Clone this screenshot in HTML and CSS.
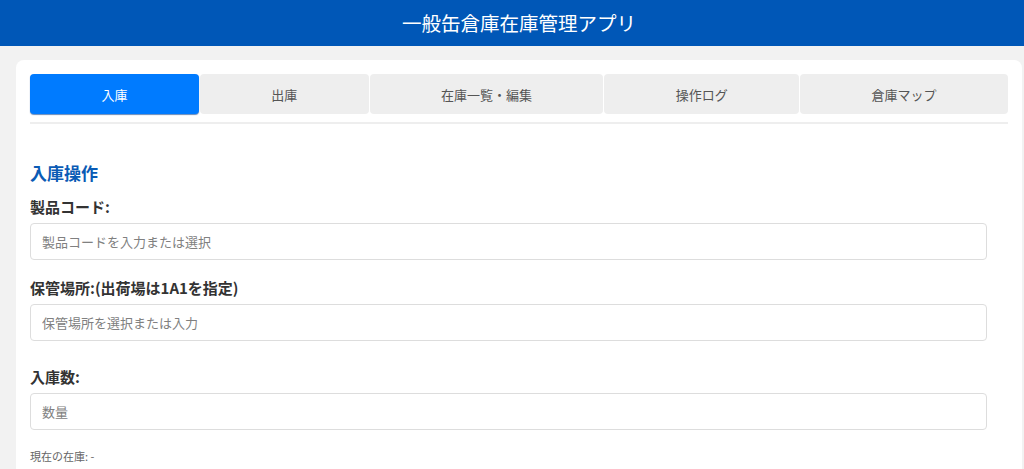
FILE: index.html
```html
<!DOCTYPE html>
<html lang="ja">
<head>
<meta charset="utf-8">
<title>一般缶倉庫在庫管理アプリ</title>
<link rel="stylesheet" href="styles.css">
</head>
<body>
<header class="app-header">
  <h1 class="app-title">一般缶倉庫在庫管理アプリ</h1>
</header>
<main class="card">
  <nav class="tabs">
    <button class="tab active">入庫</button>
    <button class="tab">出庫</button>
    <button class="tab">在庫一覧・編集</button>
    <button class="tab">操作ログ</button>
    <button class="tab">倉庫マップ</button>
  </nav>
  <section class="panel">
    <h2 class="panel-title">入庫操作</h2>
    <label class="field-label">製品コード:</label>
    <input class="field-input" type="text" placeholder="製品コードを入力または選択">
    <label class="field-label">保管場所:(出荷場は1A1を指定)</label>
    <input class="field-input" type="text" placeholder="保管場所を選択または入力">
    <div class="spacer"></div>
    <label class="field-label">入庫数:</label>
    <input class="field-input" type="text" placeholder="数量">
    <p class="stock-info">現在の在庫: -</p>
  </section>
</main>
</body>
</html>
```
FILE: styles.css
```css
html, body {
  margin: 0;
  padding: 0;
}
body {
  background: #f2f2f2;
  font-family: "Noto Sans CJK JP", "Noto Sans", sans-serif;
  color: #333;
  overflow: hidden;
}
.app-header {
  background: #0057b7;
  height: 46px;
  padding-left: 14px;
  display: flex;
  align-items: center;
  justify-content: center;
}
.app-title {
  margin: 0;
  color: #fff;
  font-size: 19.5px;
  font-weight: 400;
  line-height: 1;
}
.card {
  display: block;
  background: #fff;
  margin: 14px 2px 0 16px;
  padding: 14px 14px 40px;
  border-radius: 8px;
}
.tabs {
  display: flex;
  gap: 1px;
  padding-bottom: 8px;
  border-bottom: 2px solid #eeeeee;
}
.tab {
  flex: 1 1 auto;
  height: 40px;
  border: none;
  border-radius: 4px;
  background: #eeeeee;
  color: #555;
  font-family: inherit;
  font-size: 13px;
  padding: 0 10px;
}
.tab.active {
  background: #007bff;
  color: #fff;
  box-shadow: 0 1px 1px rgba(0, 60, 140, 0.6);
}
.panel {
  padding-top: 37px;
}
.panel-title {
  margin: 0 0 12px;
  color: #0a5bb5;
  font-size: 17px;
  font-weight: 700;
  line-height: 24px;
}
.field-label {
  display: block;
  font-size: 15px;
  font-weight: 700;
  line-height: 20px;
  color: #333;
  margin-bottom: 6px;
}
.field-input {
  display: block;
  box-sizing: border-box;
  width: calc(100% - 21px);
  height: 37px;
  margin: 0 0 18px;
  padding: 0 11px;
  border: 1px solid #dddddd;
  border-radius: 4px;
  font-family: inherit;
  font-size: 13px;
  color: #333;
  background: #fff;
}
.field-input::placeholder {
  color: #808080;
}
.spacer {
  height: 8px;
}
.stock-info {
  margin: 0;
  font-size: 11px;
  line-height: 16px;
  color: #666;
}
```
